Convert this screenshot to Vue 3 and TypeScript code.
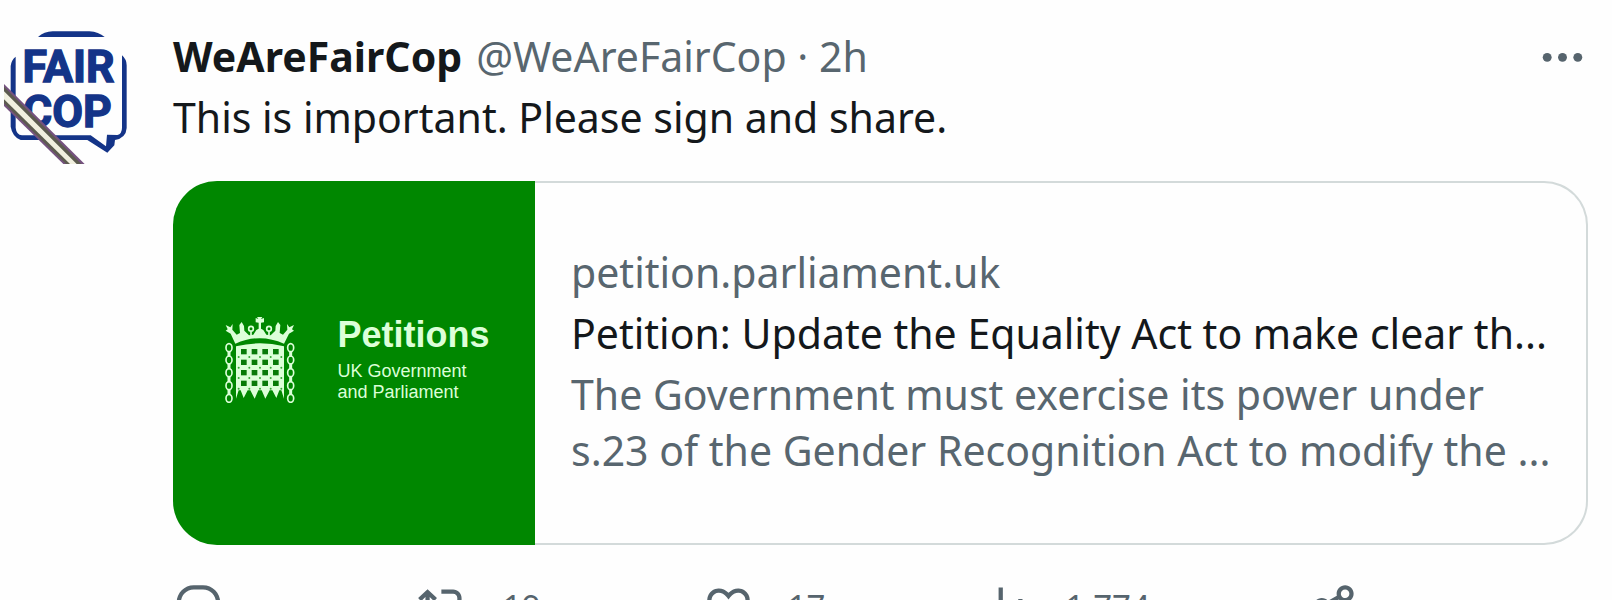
<script setup lang="ts">
interface Action {
  label: string
  count: string
  path: string
}

const actions: Action[] = [
  {
    label: 'Reply',
    count: '',
    path: 'M1.751 10c0-4.42 3.584-8 8.005-8h4.366c4.49 0 8.129 3.64 8.129 8.13 0 2.96-1.607 5.68-4.196 7.11l-8.054 4.46v-3.69h-.067c-4.49.1-8.183-3.51-8.183-8.01zm8.005-6c-3.317 0-6.005 2.69-6.005 6 0 3.37 2.77 6.08 6.138 6.01l.351-.01h1.761v2.3l5.087-2.81c1.951-1.08 3.163-3.13 3.163-5.36 0-3.39-2.744-6.13-6.129-6.13H9.756z',
  },
  {
    label: 'Repost',
    count: '19',
    path: 'M4.5 3.88l4.432 4.14-1.364 1.46L5.5 7.55V16c0 1.1.896 2 2 2H13v2H7.5c-2.209 0-4-1.79-4-4V7.55L1.432 9.48.068 8.02 4.5 3.88zM16.5 6H11V4h5.5c2.209 0 4 1.79 4 4v8.45l2.068-1.93 1.364 1.46-4.432 4.14-4.432-4.14 1.364-1.46 2.068 1.93V8c0-1.1-.896-2-2-2z',
  },
  {
    label: 'Like',
    count: '17',
    path: 'M16.697 5.5c-1.222-.06-2.679.51-3.89 2.16l-.805 1.09-.806-1.09C9.984 6.01 8.526 5.44 7.304 5.5c-1.243.07-2.349.78-2.91 1.91-.552 1.12-.633 2.78.479 4.82 1.074 1.97 3.257 4.27 7.129 6.61 3.87-2.34 6.052-4.64 7.126-6.61 1.111-2.04 1.03-3.7.477-4.82-.561-1.13-1.666-1.84-2.908-1.91zm4.187 7.69c-1.351 2.48-4.001 5.12-8.379 7.67l-.503.3-.504-.3c-4.379-2.55-7.029-5.19-8.382-7.67-1.36-2.5-1.41-4.86-.514-6.67.887-1.79 2.647-2.91 4.601-3.01 1.651-.09 3.368.56 4.798 2.01 1.429-1.45 3.146-2.1 4.796-2.01 1.954.1 3.714 1.22 4.601 3.01.896 1.81.846 4.17-.514 6.67z',
  },
  {
    label: 'Views',
    count: '1,774',
    path: 'M8.75 21V3h2v18h-2zM18 21V8.5h2V21h-2zM4 21l.004-10h2L6 21H4zm9.248 0v-7h2v7h-2z',
  },
  {
    label: 'Share',
    count: '',
    path: 'M17 4c-1.1 0-2 .9-2 2 0 .33.08.65.22.92C15.56 7.56 16.23 8 17 8c1.1 0 2-.9 2-2s-.9-2-2-2zm-4 2c0-2.21 1.79-4 4-4s4 1.79 4 4-1.79 4-4 4c-1.17 0-2.22-.5-2.95-1.3l-4.16 2.37c.07.3.11.61.11.93s-.04.63-.11.93l4.16 2.37c.73-.8 1.78-1.3 2.95-1.3 2.21 0 4 1.79 4 4s-1.79 4-4 4-4-1.79-4-4c0-.32.04-.63.11-.93L8.95 14.7C8.22 15.5 7.17 16 6 16c-2.21 0-4-1.79-4-4s1.79-4 4-4c1.17 0 2.22.5 2.95 1.3l4.16-2.37c-.07-.3-.11-.61-.11-.93zm-7 4c-1.1 0-2 .9-2 2s.9 2 2 2c.77 0 1.44-.44 1.78-1.08.14-.27.22-.59.22-.92s-.08-.65-.22-.92C7.44 10.44 6.77 10 6 10zm11 6c-.77 0-1.44.44-1.78 1.08-.14.27-.22.59-.22.92 0 1.1.9 2 2 2s2-.9 2-2-.9-2-2-2z',
  },
]

const holeColumns: number[] = [102, 134, 166, 198]
const holeRows: number[] = [155, 187, 218, 250]
const chainLinks: number[] = [143, 180, 218, 257, 295]
</script>

<template>
  <article class="post">
    <a class="avatar" href="#" aria-label="WeAreFairCop profile">
      <svg viewBox="12 32 372 402" aria-hidden="true">
        <g fill="#143488">
          <path d="M114 53Q132 37 158 36H268Q296 38 314 53Z" />
          <path d="M47 112V325Q49 346 66 348H272L318 381L321 346L352 347Q366 343 366 325V108Q380 120 380 138V326Q378 356 345 362L343 378L322 400L262 362H62Q37 352 32 322V140Q34 122 47 112Z" />
        </g>
        <g class="avatar-text" fill="#143488" stroke="#143488" stroke-width="4" text-anchor="middle">
          <text x="206" y="188">FAIR</text>
          <text x="202" y="324">COP</text>
        </g>
        <path d="M12 194L254 434H190L12 260Z" fill="#75527f" />
        <path d="M12 202L244 434H198L12 252Z" fill="#5c5b4f" />
        <path d="M12 216L230 434H210L12 240Z" fill="#f1f0df" />
      </svg>
    </a>

    <div class="main">
      <header class="header">
        <div class="byline">
          <a class="name" href="#">WeAreFairCop</a>
          <span class="meta">@WeAreFairCop · 2h</span>
        </div>
        <button class="more" type="button" aria-label="More">
          <svg class="icon" viewBox="0 0 24 24" aria-hidden="true">
            <circle cx="4.8" cy="12.4" r="2.1" />
            <circle cx="12" cy="12.4" r="2.1" />
            <circle cx="19.2" cy="12.4" r="2.1" />
          </svg>
        </button>
      </header>

      <p class="text">This is important. Please sign and share.</p>

      <a class="card" href="#">
        <div class="thumb">
          <svg class="portcullis" viewBox="42 48 216 261" aria-hidden="true">
            <g fill="#dcffd8">
              <path d="M76 131L62 101L47 92L53 88L47 75L61 82L68 72L67 89L80 104L90 99L88 75L95 66L102 78L103 92L117 106L130 104L139 90L146 86L146 68L137 67V54L145 57L141 51H157L153 57L162 54V67L153 68L153 86L160 90L169 104L182 106L196 92L197 78L204 66L211 75L209 99L219 104L232 89L231 72L238 82L252 75L246 88L252 92L237 101L222 131Q150 98 76 131Z" />
              <path d="M78 139Q150 121 222 139V296L214 271H208L199 294L187 271H179L166 296L155 271H145L134 296L121 271H113L101 294L92 271H86L78 296Z" />
            </g>
            <g fill="none" stroke="#dcffd8" stroke-width="5">
              <circle cx="123" cy="86" r="7" />
              <circle cx="177" cy="86" r="7" />
              <path d="M123 93v12M177 93v12" />
            </g>
            <g fill="#087a08">
              <template v-for="y in holeRows" :key="y">
                <rect v-for="x in holeColumns" :key="x" :x="x - 9" :y="y - 8" width="17" height="16" />
              </template>
            </g>
            <g fill="#35a335">
              <template v-for="y in holeRows" :key="y">
                <circle v-for="x in [86, 118, 150, 182, 214]" :key="x" :cx="x" :cy="y + 16" r="3" />
              </template>
            </g>
            <g fill="none" stroke="#dcffd8" stroke-width="5">
              <template v-for="x in [57, 242]" :key="x">
                <ellipse v-for="y in chainLinks" :key="y" :cx="x" :cy="y" rx="9" ry="12" />
                <path :d="`M${x} 153v17M${x} 190v18M${x} 228v19M${x} 267v18`" stroke-width="9" />
              </template>
            </g>
          </svg>
          <div class="thumb-copy">
            <strong class="thumb-title">Petitions</strong>
            <span>UK Government</span>
            <span>and Parliament</span>
          </div>
        </div>
        <div class="card-copy">
          <p class="domain">petition.parliament.uk</p>
          <p class="title">Petition: Update the Equality Act to make clear th...</p>
          <p class="description">
            The Government must exercise its power under<br />
            s.23 of the Gender Recognition Act to modify the ...
          </p>
        </div>
      </a>

      <div class="actions">
        <button v-for="action in actions" :key="action.label" class="action" type="button" :aria-label="action.label">
          <svg class="icon" viewBox="0 0 24 24" aria-hidden="true"><path :d="action.path" /></svg>
          <span v-if="action.count">{{ action.count }}</span>
        </button>
      </div>
    </div>
  </article>
</template>

<style>
html {
  overflow: hidden;
}

body {
  margin: 0;
  background: #fefefe;
}
</style>

<style scoped>
.post {
  display: grid;
  grid-template-columns: 124px minmax(0, 1fr);
  gap: 45px;
  padding: 28px 24px 0 4px;
  color: #14181b;
  font-family: "Noto Sans", sans-serif;
  font-size: 41px;
  line-height: 56px;
}

.avatar {
  padding-top: 2px;
}

.avatar svg {
  display: block;
  width: 124px;
  height: 134px;
}

.avatar-text {
  font-family: "Liberation Sans Narrow", "Roboto", sans-serif;
  font-size: 134px;
  font-weight: 700;
}

.header {
  display: flex;
  justify-content: space-between;
  align-items: center;
}

.byline {
  display: flex;
  gap: 14px;
  white-space: nowrap;
}

.name {
  color: inherit;
  font-weight: 700;
  text-decoration: none;
}

.meta,
.domain,
.description {
  color: #58666f;
}

button {
  padding: 0;
  border: 0;
  background: none;
  color: #56646d;
  font: inherit;
  cursor: pointer;
}

.icon {
  display: block;
  flex: none;
  width: 51px;
  height: 51px;
  fill: currentColor;
}

p {
  margin: 0;
}

.text {
  margin-top: 5px;
}

.card {
  display: flex;
  margin-top: 36px;
  color: inherit;
  text-decoration: none;
}

.thumb {
  display: flex;
  flex: none;
  align-items: center;
  justify-content: center;
  gap: 41px;
  box-sizing: border-box;
  width: 362px;
  height: 364px;
  padding: 0 0 8px 6px;
  border-radius: 44px 0 0 44px;
  background: #008700;
  color: #dcffd8;
}

.portcullis {
  width: 72px;
  height: 87px;
}

.thumb-copy {
  display: flex;
  flex-direction: column;
  font-family: "Liberation Sans", Arial, sans-serif;
  font-size: 18px;
  line-height: 21px;
}

.thumb-title {
  margin-bottom: 6px;
  font-size: 36px;
  line-height: 40px;
}

.card-copy {
  display: flex;
  flex: 1;
  flex-direction: column;
  justify-content: center;
  gap: 5px;
  min-width: 0;
  padding: 0 36px 4px;
  border: 2px solid #d3dada;
  border-left: 0;
  border-radius: 0 44px 44px 0;
}

.title,
.description {
  white-space: nowrap;
}

.actions {
  display: grid;
  grid-template-columns: 245fr 285fr 278fr 329fr 279fr;
  margin-top: 36px;
}

.action {
  display: flex;
  align-items: center;
  gap: 34px;
  font-size: 33px;
  line-height: 51px;
}
</style>
